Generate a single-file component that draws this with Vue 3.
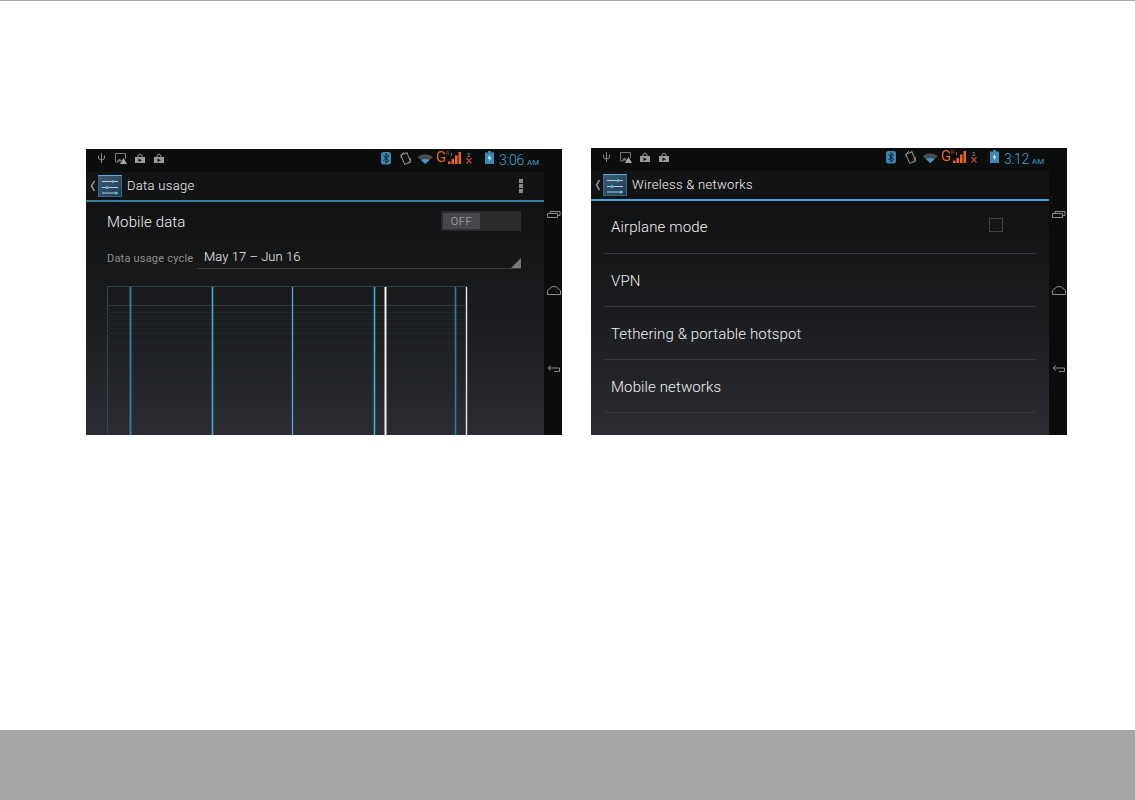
<script setup>
const rows = ['Airplane mode', 'VPN', 'Tethering & portable hotspot', 'Mobile networks']
const screens = [
  { id: 'data', title: 'Data usage', time: '3:06' },
  { id: 'wireless', title: 'Wireless & networks', time: '3:12' }
]
const gridY = [19, 26, 30, 33, 37, 42, 47, 57, 71, 81, 91]
const vLines = [
  { x: 23.5, w: 2, c: '#2f7d9c' },
  { x: 105.5, w: 1.6, c: '#4fa6cc' },
  { x: 185.5, w: 1.2, c: '#5db4da' },
  { x: 267.5, w: 1.6, c: '#4fa6cc' },
  { x: 278.5, w: 2, c: '#f2f2f2' },
  { x: 348.5, w: 1.6, c: '#2f7d9c' },
  { x: 359.5, w: 1.4, c: '#e8e8e8' }
]
</script>

<template>
  <div class="page">
    <div class="shots">
      <section v-for="s in screens" :key="s.id" class="phone" :class="s.id">
        <div class="main">
          <div class="status">
            <svg class="sleft" width="76" height="14" viewBox="0 0 76 14">
              <path d="M6.500 1V11M3.500 3.500V6q0 1.500 3 2q3-.5 3-2V3.500" fill="none" stroke="#8a8a8a" />
              <path d="M20.500 1.500h10V7M20.500 1.500V10H24" fill="none" stroke="#777" />
              <path d="M21.500 9.500l3-3 3 3z" fill="#777" />
              <path d="M28.500 6l3.500 6h-7z" fill="#a8a8a8" />
              <path d="M40 5h10v6H40z" fill="#9a9a9a" />
              <path d="M43 5V3.500q2-3 4 0V5" fill="none" stroke="#9a9a9a" />
              <path d="M43.500 6.500l3.500 1.800-3.500 1.800z" fill="#111" />
              <path d="M59 5h10v6H59z" fill="#9a9a9a" />
              <path d="M62 5V3.500q2-3 4 0V5" fill="none" stroke="#9a9a9a" />
              <path d="M62.500 6.500l3.500 1.800-3.500 1.800z" fill="#111" />
            </svg>
            <div class="sright">
              <svg class="sicons" width="100" height="14" viewBox="0 0 100 14">
                <rect x="0" y="0" width="10" height="12.500" rx="2.500" fill="#3b87b4" />
                <path d="M2.500 3.500l5 5L5 11V1.500L7.500 4l-5 5" fill="none" stroke="#0f1a22" stroke-width="1" />
                <g fill="none" stroke="#8d8d8d" stroke-width="1">
                  <rect x="21.500" y="1.500" width="6.500" height="10" transform="rotate(-22 25 6.500)" />
                  <path d="M20 6q-.5-4 3-6M29.500 6q.5 4-3 6" />
                </g>
                <path d="M36.500 5q7.500-5.500 15.500 0l-7.800 7z" fill="#4a4d50" />
                <path d="M40 8q4-2 8.500 0l-4.300 4z" fill="#3f9ccb" />
                <g fill="#e8622c">
                  <rect x="67" y="9.500" width="2.600" height="2.500" />
                  <rect x="70.500" y="7" width="2.600" height="5" />
                  <rect x="74" y="3.500" width="2.600" height="8.500" />
                  <rect x="77.500" y="0" width="2.600" height="12" />
                </g>
                <path d="M70.500 1v3" stroke="#777" fill="none" />
                <path d="M85.500 6l5 5.500m0-5.500l-5 5.500" stroke="#b8402c" stroke-width="1.400" fill="none" />
              </svg>
              <span class="net">G</span><span class="roam">R</span><span class="simnum">2</span>
              <svg class="bat" width="9" height="13" viewBox="0 0 9 13">
                <path d="M3 0h3v1.500h3V13H0V1.500h3z" fill="#3b87b4" />
                <path d="M5 3.500L2.500 7.500h2L4 10.500 6.500 6.500h-2z" fill="#dff" />
              </svg>
              <span class="time">{{ s.time }}</span><span class="ampm">AM</span>
            </div>
          </div>

          <header class="bar">
            <svg width="6" height="12" viewBox="0 0 6 12" class="chev">
              <path d="M4.500 1L1.500 6l3 5" fill="none" stroke="#8f8f8f" stroke-width="1.600" />
            </svg>
            <svg class="appicon" width="24" height="24" viewBox="0 0 24 24">
              <defs>
                <linearGradient :id="s.id + 'g'" x1="0" y1="0" x2="1" y2="1">
                  <stop offset="0" stop-color="#3f5d74" />
                  <stop offset="1" stop-color="#223a50" />
                </linearGradient>
              </defs>
              <rect x=".5" y="1.500" width="23" height="21" :fill="`url(#${s.id}g)`" stroke="#34688a" />
              <path d="M.5 1.500h23" stroke="#5bb0dc" />
              <path d="M4 7.500h16M4 13.500h16M4 19h16" stroke="#9fd0ea" fill="none" />
              <circle cx="15" cy="7.500" r="1.600" fill="#5cb1e0" />
              <circle cx="9" cy="13.500" r="1.600" fill="#5cb1e0" />
              <circle cx="18" cy="19" r="1.600" fill="#5cb1e0" />
            </svg>
            <h1 class="title">{{ s.title }}</h1>
            <div v-if="s.id === 'data'" class="menu"><i></i><i></i><i></i></div>
          </header>
          <div class="rule"></div>

          <div v-if="s.id === 'data'" class="content usage">
            <div class="mobile">
              <span class="big">Mobile data</span>
              <div class="toggle"><span>OFF</span></div>
            </div>
            <div class="cycle">
              <span class="cycle-label">Data usage cycle</span>
              <div class="spinner">May 17 – Jun 16</div>
            </div>
            <svg class="chart" width="361" height="149" viewBox="0 0 361 149">
              <path d="M.5 149V.5H360" fill="none" stroke="#2d4650" />
              <path d="M0 19.500H360" stroke="#34373a" />
              <path v-for="y in gridY.slice(1)" :key="y" :d="`M0 ${y + .5}H360`" stroke="#232629" />
              <rect v-for="l in vLines" :key="l.x" :x="l.x - l.w / 2" y="1" :width="l.w" height="148" :fill="l.c" />
            </svg>
          </div>

          <ul v-else class="content list">
            <li v-for="(r, i) in rows" :key="r" class="row">
              <span class="big">{{ r }}</span>
              <span v-if="i === 0" class="check"></span>
            </li>
          </ul>
        </div>

        <nav class="softkeys">
          <svg width="14" height="8" viewBox="0 0 14 8">
            <path d="M.5 3.500h10v4H.5zM3 3V1.500h10v4h-2" fill="none" stroke="#8d8d8d" />
          </svg>
          <svg width="14" height="9" viewBox="0 0 14 9">
            <path d="M.5 8.500V4.500L5 .7h4l4.500 3.800v4z" fill="none" stroke="#8d8d8d" />
          </svg>
          <svg width="14" height="8" viewBox="0 0 14 8">
            <path d="M4 .5L1 3h11.500v3.500H7M4 5.500L1 3" fill="none" stroke="#8d8d8d" />
          </svg>
        </nav>
      </section>
    </div>
    <footer class="band"></footer>
  </div>
</template>

<style>
html, body { margin: 0; background: #fff; }
</style>

<style scoped>
.page {
  height: 800px;
  display: flex;
  flex-direction: column;
  border-top: 1px solid #a7a5a5;
  box-sizing: border-box;
  font-family: Roboto, "Liberation Sans", sans-serif;
  overflow: hidden;
}
.shots {
  display: flex;
  align-items: flex-end;
  gap: 29px;
  padding-left: 86px;
  height: 434px;
}
.phone {
  width: 476px;
  display: flex;
  background: #0b0c0c;
  filter: blur(.3px);
}
.phone.data { height: 286px; }
.phone.wireless { height: 287px; }
.main {
  width: 458px;
  display: flex;
  flex-direction: column;
  background: linear-gradient(#101112 0, #131415 30%, #1e1f22 65%, #2a2c32 100%);
}
.status {
  height: 23px;
  flex: none;
  box-sizing: border-box;
  display: flex;
  align-items: flex-start;
  justify-content: space-between;
  padding: 3px 5px 0 9px;
  background: #0c0d0d;
}
.sleft, .sicons { display: block; flex: none; }
.sright {
  display: flex;
  align-items: flex-start;
  position: relative;
  width: 158px;
  height: 20px;
}
.net, .roam, .simnum { position: absolute; line-height: 1; }
.net { left: 55px; top: -2px; font-size: 15px; color: #e8622c; }
.roam { left: 65px; top: -1px; font-size: 5px; color: #a0502c; }
.simnum { left: 86px; top: 0; font-size: 6px; color: #aaa; }
.bat { display: block; flex: none; margin-left: 4px; margin-top: -1px; }
.time {
  margin-left: 5px;
  font-size: 14px;
  font-weight: 300;
  color: #4aa6d4;
  letter-spacing: -.3px;
}
.ampm { margin-left: 3px; margin-top: 6px; font-size: 8px; color: #3f9ccb; }
.bar {
  height: 28px;
  flex: none;
  display: flex;
  align-items: center;
  padding: 0 0 0 4px;
  background: #121314;
}
.chev { flex: none; }
.appicon { flex: none; margin-left: 2px; }
.title {
  margin: -2px 0 0 5px;
  font-size: 13px;
  font-weight: 300;
  letter-spacing: .3px;
  color: #f2f2f2;
}
.menu {
  margin-left: auto;
  margin-right: 21px;
  display: flex;
  flex-direction: column;
  gap: 1px;
}
.menu i { width: 4px; height: 4px; background: #8b8b8b; }
.rule { height: 2px; flex: none; background: #2f7f9e; }
.wireless .rule { background: #47a7d2; }
.content { flex: 1; min-height: 0; }
.big { font-size: 15px; font-weight: 300; letter-spacing: .12px; color: #f2f2f2; }
.usage { padding: 0 23px 0 21px; }
.mobile {
  height: 38px;
  display: flex;
  align-items: center;
  justify-content: space-between;
}
.mobile .big { padding-top: 2px; }
.toggle {
  width: 80px;
  height: 20px;
  padding: 2px;
  box-sizing: border-box;
  background: #2a2b2d;
}
.toggle span {
  display: block;
  width: 37px;
  height: 16px;
  background: #47484b;
  color: #bcbcbc;
  font-size: 11px;
  font-weight: 300;
  line-height: 17px;
  text-align: center;
  letter-spacing: .5px;
}
.cycle {
  display: flex;
  align-items: flex-end;
  height: 29px;
  margin-bottom: 17px;
}
.cycle-label {
  width: 90px;
  flex: none;
  font-size: 11px;
  color: #8f8f8f;
  letter-spacing: .2px;
  padding-bottom: 4px;
  white-space: nowrap;
}
.spinner {
  flex: 1;
  height: 20px;
  box-sizing: border-box;
  padding-left: 7px;
  font-size: 13px;
  font-weight: 300;
  color: #f2f2f2;
  letter-spacing: .05px;
  border-bottom: 1px solid #3a3b3d;
  position: relative;
}
.spinner::after {
  content: "";
  position: absolute;
  right: 0;
  bottom: 0;
  border-style: solid;
  border-width: 0 0 10px 10px;
  border-color: transparent transparent #77797b transparent;
}
.chart { display: block; }
.list {
  margin: 0;
  padding: 0 13px;
  list-style: none;
}
.row {
  height: 53px;
  box-sizing: border-box;
  padding: 2px 33px 0 7px;
  display: flex;
  align-items: center;
  justify-content: space-between;
  border-bottom: 1px solid #35373a;
}
.row:first-child { padding-top: 0; }
.check {
  width: 12px;
  height: 12px;
  margin-top: -4px;
  border: 1px solid #404244;
}
.softkeys {
  flex: 1;
  display: flex;
  flex-direction: column;
  align-items: center;
  padding-left: 2px;
}
.softkeys svg { display: block; flex: none; }
.softkeys svg:nth-child(1) { margin-top: 61px; }
.softkeys svg:nth-child(2) { margin-top: 68px; }
.softkeys svg:nth-child(3) { margin-top: 70px; }
.wireless .softkeys svg:nth-child(1) { margin-top: 62px; }
.band {
  margin-top: auto;
  height: 70px;
  background: #a7a5a5;
}
</style>
